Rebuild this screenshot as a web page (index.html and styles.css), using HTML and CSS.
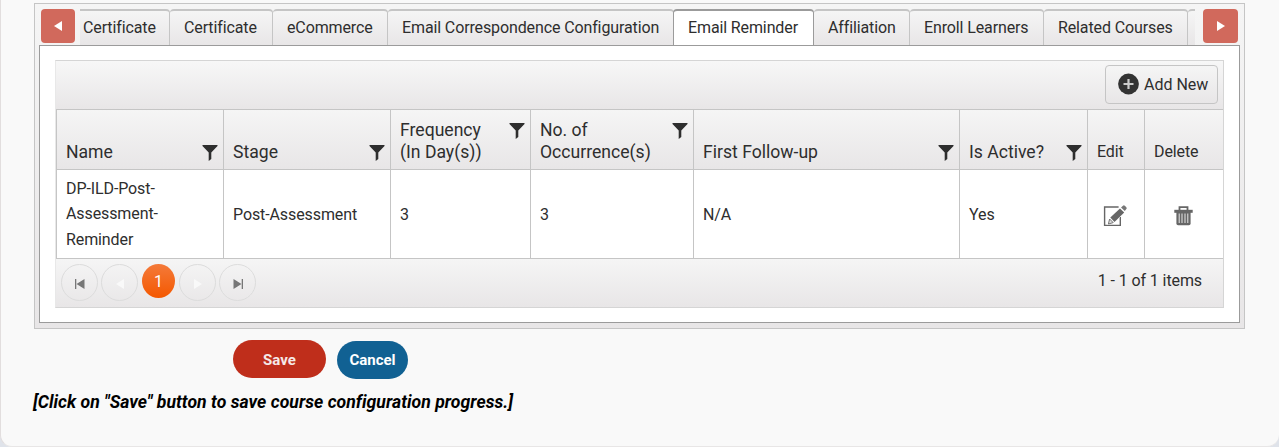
FILE: index.html
```html
<!DOCTYPE html>
<html lang="en">
<head>
    <meta charset="UTF-8">
    <meta name="viewport" content="width=device-width, initial-scale=1.0">
    <title>Email Reminder</title>
    <link rel="stylesheet" href="styles.css">
</head>
<body>
    <svg class="defs" width="0" height="0">
        <symbol id="filter" viewBox="0 0 16 16">
            <path d="M.5 0h15v1L9.3 7.5V14l-2.6 2V7.5L.5 1z"/>
        </symbol>
    </svg>

    <div class="page">
        <div class="tabstrip">
            <div class="tabs-row">
                <button class="scroll-btn"><svg width="8" height="10" viewBox="0 0 8 10"><path d="M8 0v10L0 5z"/></svg></button>
                <ul class="tabs">
                    <li class="tab first">Certificate</li>
                    <li class="tab w-cert">Certificate</li>
                    <li class="tab w-ecom">eCommerce</li>
                    <li class="tab w-corr">Email Correspondence Configuration</li>
                    <li class="tab w-rem active">Email Reminder</li>
                    <li class="tab w-aff">Affiliation</li>
                    <li class="tab w-enr">Enroll Learners</li>
                    <li class="tab w-rel">Related Courses</li>
                    <li class="tab w-next"></li>
                </ul>
                <button class="scroll-btn next"><svg width="8" height="10" viewBox="0 0 8 10"><path d="M0 0v10l8-5z"/></svg></button>
            </div>

            <div class="tab-content">
                <div class="grid">
                    <div class="toolbar">
                        <button class="add-btn">
                            <svg width="21" height="22" viewBox="0 0 21 22"><circle cx="10.5" cy="11" r="10.4" fill="#333"/><path d="M10.5 6v10M5.5 11h10" stroke="#ccc" stroke-width="2.2"/></svg>
                            <span>Add New</span>
                        </button>
                    </div>

                    <table>
                        <colgroup>
                            <col class="c-name"><col class="c-stage"><col class="c-freq"><col class="c-occ">
                            <col class="c-follow"><col class="c-active"><col class="c-edit"><col>
                        </colgroup>
                        <thead>
                            <tr>
                                <th><div class="head"><span>Name</span><svg class="filter"><use href="#filter"/></svg></div></th>
                                <th><div class="head"><span>Stage</span><svg class="filter"><use href="#filter"/></svg></div></th>
                                <th><div class="head"><span>Frequency<br>(In Day(s))</span><svg class="filter"><use href="#filter"/></svg></div></th>
                                <th><div class="head"><span>No. of<br>Occurrence(s)</span><svg class="filter"><use href="#filter"/></svg></div></th>
                                <th><div class="head"><span>First Follow-up</span><svg class="filter"><use href="#filter"/></svg></div></th>
                                <th><div class="head"><span>Is Active?</span><svg class="filter"><use href="#filter"/></svg></div></th>
                                <th class="small">Edit</th>
                                <th class="small">Delete</th>
                            </tr>
                        </thead>
                        <tbody>
                            <tr>
                                <td>DP-ILD-Post-Assessment-Reminder</td>
                                <td class="mid">Post-Assessment</td>
                                <td class="mid">3</td>
                                <td class="mid">3</td>
                                <td class="mid">N/A</td>
                                <td class="mid">Yes</td>
                                <td class="icon edit">
                                    <svg width="24" height="22" viewBox="0 0 24 22">
                                        <path d="M17.3 12v8.4H1.6V2h14" fill="none" stroke="#666" stroke-width="1.4"/>
                                        <path d="M4 19.5l2-6.5L17 2.6l5 5L10.5 18z" fill="#fff"/>
                                        <path d="M7.3 12.6L17 3.4l4.2 4.2-9.7 9.4z" fill="#666"/>
                                        <path d="M18 2.6L20 .7q.9-.8 1.8.1l1.5 1.5q.8.9 0 1.8l-1.5 2z" fill="#777"/>
                                        <path d="M6.6 14l3.6 3.6-4.8 1.4z" fill="#ddd" stroke="#777"/>
                                    </svg>
                                </td>
                                <td class="icon delete">
                                    <svg width="19" height="20" viewBox="0 0 19 20">
                                        <path d="M5.5 4V1.2h8V4" fill="none" stroke="#666" stroke-width="1.8"/>
                                        <path d="M.3 3.8h18.4v3H.3z" fill="#666"/>
                                        <path d="M2.4 6h14.2v11.6q0 1.7-1.7 1.7H4.1q-1.7 0-1.7-1.7z" fill="#666"/>
                                        <path d="M5.2 7.5V17M8 7.5V17M11 7.5V17M13.8 7.5V17" stroke="#e8e8e8" stroke-width="1"/>
                                    </svg>
                                </td>
                            </tr>
                        </tbody>
                    </table>

                    <div class="pager">
                        <a class="page-btn"><svg width="10" height="10" viewBox="0 0 10 10"><path d="M0 0h1.3v10H0zM9.5 0v10L1.5 5z"/></svg></a>
                        <a class="page-btn off"><svg width="10" height="10" viewBox="0 0 10 10"><path d="M9 0v10L1 5z"/></svg></a>
                        <span class="page-current">1</span>
                        <a class="page-btn off"><svg width="10" height="10" viewBox="0 0 10 10"><path d="M1 0v10l8-5z"/></svg></a>
                        <a class="page-btn"><svg width="10" height="10" viewBox="0 0 10 10"><path d="M8.7 0H10v10H8.7zM.5 0v10l8-5z"/></svg></a>
                        <span class="pager-info">1 - 1 of 1 items</span>
                    </div>
                </div>
            </div>
        </div>

        <div class="actions">
            <button class="btn save">Save</button>
            <button class="btn cancel">Cancel</button>
        </div>
        <p class="note">[Click on "Save" button to save course configuration progress.]</p>
    </div>
</body>
</html>
```

FILE: styles.css
```css
* {
    box-sizing: border-box;
}

body {
    margin: 0;
    background: #dfe3ea;
    font-family: Roboto, Arial, sans-serif;
    font-size: 16px;
    color: #2e2e2e;
}

button {
    font-family: inherit;
    font-size: 16px;
    color: inherit;
    padding: 0;
    border: none;
}

.defs {
    display: block;
}

.page {
    height: 447px;
    padding: 3px 34px 0 33px;
    background: #f9f9f9;
    border-left: 1px solid #e2dede;
    border-bottom: 1px solid #e8e6e6;
    border-radius: 0 0 12px 12px;
    overflow: hidden;
}

.tabstrip {
    height: 326px;
    padding: 5px 4px 0;
    border: 1px solid #c5c5c5;
    background: linear-gradient(#f5f5f5, #e8e6e7);
}

.tabs-row {
    display: flex;
    height: 36px;
    padding: 0 2px;
}

.scroll-btn {
    display: flex;
    align-items: center;
    justify-content: center;
    width: 34px;
    height: 34px;
    flex: none;
    border-radius: 4px;
    background: #d1695c;
    fill: #fff;
}

.scroll-btn.next {
    width: 35px;
}

.tabs {
    display: flex;
    width: 1115px;
    flex: none;
    margin: 0 8px 0 5px;
    padding: 0;
    overflow: hidden;
    list-style: none;
}

.tab {
    flex: none;
    height: 36px;
    padding-left: 14px;
    border-top: 2px solid #c5c5c5;
    border-right: 1px solid #c5c5c5;
    border-radius: 4px 4px 0 0;
    background: linear-gradient(#f5f5f5, #e8e6e7);
    letter-spacing: -0.12px;
    line-height: 34px;
    white-space: nowrap;
}

.tab.first {
    width: 90px;
    padding-left: 3px;
    border-top-left-radius: 0;
}

.tab.active {
    margin-left: -1px;
    padding-left: 14px;
    border-color: #9b9b9b;
    border-left: 1px solid #9b9b9b;
    background: #fff;
}

.w-cert { width: 103px; }
.w-ecom { width: 115px; }
.w-corr { width: 286px; }
.w-rem { width: 141px; }
.w-aff { width: 96px; }
.w-enr { width: 134px; }
.w-rel { width: 144px; }
.w-next { width: 100px; }

.tab-content {
    height: 278px;
    padding: 14px 15px;
    border: 1px solid #9b9b9b;
    background: #fff;
}

.grid {
    height: 248px;
    border: 1px solid #d5d5d5;
    border-left-color: #e8e8e8;
}

.toolbar {
    display: flex;
    justify-content: flex-end;
    height: 48px;
    padding: 4px 5px 0 0;
    background: linear-gradient(#f7f7f7, #e8e6e7);
}

.add-btn {
    display: flex;
    align-items: center;
    gap: 5px;
    width: 113px;
    height: 39px;
    padding: 0 0 1px 12px;
    border: 1px solid #c5c5c5;
    border-radius: 4px;
    background: linear-gradient(#f5f5f5, #e8e6e7);
    white-space: nowrap;
}

table {
    width: 100%;
    table-layout: fixed;
    border-collapse: separate;
    border-spacing: 0;
    border-top: 1px solid #c5c5c5;
}

.c-name { width: 167px; }
.c-stage { width: 167px; }
.c-freq { width: 140px; }
.c-occ { width: 163px; }
.c-follow { width: 266px; }
.c-active { width: 128px; }
.c-edit { width: 57px; }

th {
    height: 60px;
    padding: 0 5px 6px 9px;
    border-left: 1px solid #c5c5c5;
    border-bottom: 1px solid #c5c5c5;
    background: linear-gradient(#f5f5f5, #e8e6e7);
    font-size: 17.6px;
    font-weight: normal;
    line-height: 22px;
    text-align: left;
    vertical-align: bottom;
}

th.small {
    font-size: 16px;
    letter-spacing: -0.1px;
    white-space: nowrap;
}

.head {
    display: flex;
    justify-content: space-between;
    align-items: flex-start;
}

.filter {
    width: 16px;
    height: 16px;
    margin-top: 4px;
    flex: none;
    fill: #2e2e2e;
}

td {
    height: 89px;
    padding: 0 9px;
    border-left: 1px solid #c5c5c5;
    border-bottom: 1px solid #c5c5c5;
    background: #fff;
    letter-spacing: -0.1px;
    line-height: 25.6px;
}

td.mid {
    padding-top: 1px;
}

td.icon {
    padding: 3px 0 0;
    line-height: 0;
    text-align: center;
}

td.edit {
    padding-right: 2px;
}

td.delete {
    padding-right: 2px;
}

.pager {
    display: flex;
    height: 48px;
    padding: 5px 21px 0 5px;
    background: linear-gradient(#f5f5f5, #e8e6e7);
}

.page-btn {
    display: flex;
    align-items: center;
    justify-content: center;
    width: 37px;
    height: 37px;
    margin-right: 3px;
    padding-top: 2px;
    border: 1px solid #dcdcdc;
    border-radius: 50%;
    fill: #777;
}

.page-btn.off {
    fill: #f9f9f9;
}

.page-current {
    width: 33px;
    height: 34px;
    margin: 0 4px 0 1px;
    border-radius: 50%;
    background: linear-gradient(#f47a3a, #f45800);
    color: #fff;
    line-height: 35px;
    text-align: center;
}

.pager-info {
    margin-left: auto;
    letter-spacing: -0.1px;
    line-height: 34px;
}

.actions {
    display: flex;
    gap: 11px;
    padding: 11px 0 0 199px;
}

.btn {
    height: 38px;
    border-radius: 19px;
    color: #fff;
    font-size: 15px;
    font-weight: bold;
}

.save {
    width: 93px;
    padding-top: 1px;
    background: #bf2e1b;
    color: #f5e9e8;
}

.cancel {
    width: 71px;
    margin-top: 1px;
    background: #116193;
}

.note {
    margin: 12px 0 0 -1px;
    color: #000;
    font-size: 17.6px;
    font-style: italic;
    font-weight: bold;
    letter-spacing: 0.04px;
    line-height: 22px;
}
```
